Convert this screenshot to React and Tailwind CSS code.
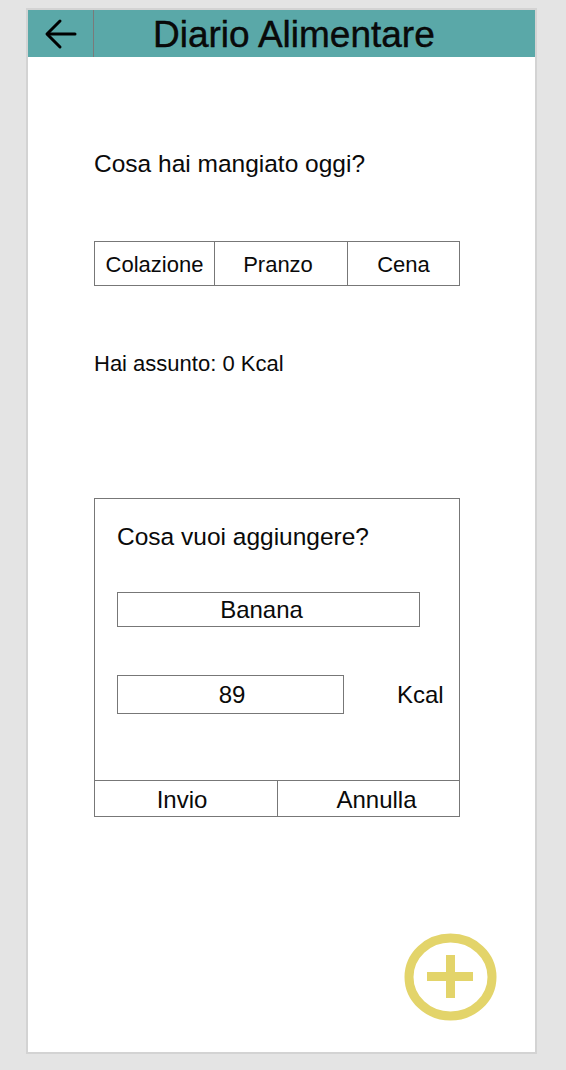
import React from "react";

const tabs = [
  { label: "Colazione", w: "w-[120px]", pad: "" },
  { label: "Pranzo", w: "w-[133px]", pad: "pr-[6px]" },
  { label: "Cena", w: "flex-1", pad: "" },
];

const App = () => {
  return (
    <div className="min-h-[1070px] bg-[#e4e4e4] pt-[8px] font-['Liberation_Sans',Arial,sans-serif] text-[#0a0a0a]">
      <div className="ml-[26px] w-[511px] h-[1046px] border-2 border-[#d3d3d3] bg-white flex flex-col">
        {/* Header */}
        <div className="h-[47px] bg-[#5aa8a8] flex items-stretch">
          <div className="w-[66px] border-r border-[#7a7a7a] flex items-center justify-center">
            <svg width="34" height="32" viewBox="0 0 34 32" fill="none" stroke="#000" strokeWidth="3" strokeLinecap="round" strokeLinejoin="round">
              <path d="M31 16H4" />
              <path d="M16 3L3 16l13 13" />
            </svg>
          </div>
          <div className="pl-[59px] flex items-center text-[37px] leading-none pt-[2px] [-webkit-text-stroke:0.4px_#000]">
            Diario Alimentare
          </div>
        </div>

        {/* Content */}
        <div className="pl-[66px] flex flex-col">
          <p className="mt-[93px] text-[24.5px] leading-[28px]">Cosa hai mangiato oggi?</p>

          <div className="mt-[63px] w-[366px] h-[45px] border border-[#777] flex">
            {tabs.map((t, i) => (
              <div
                key={t.label}
                className={`${t.w} ${t.pad} flex items-center justify-center text-[22px] pt-[2px] ${
                  i < tabs.length - 1 ? "border-r border-[#777]" : ""
                }`}
              >
                {t.label}
              </div>
            ))}
          </div>

          <p className="mt-[65px] text-[22px] leading-[26px]">Hai assunto: 0 Kcal</p>

          {/* Add food card */}
          <div className="mt-[121px] w-[366px] h-[319px] border border-[#777] flex flex-col">
            <div className="pl-[22px] pt-[24px] flex flex-col">
              <p className="text-[24.5px] leading-[28px]">Cosa vuoi aggiungere?</p>
              <div className="mt-[41px] w-[303px] h-[35px] border border-[#777] flex items-center justify-center text-[24px] pr-[14px]">
                Banana
              </div>
              <div className="mt-[48px] flex items-center">
                <div className="w-[227px] h-[39px] border border-[#777] flex items-center justify-center text-[24px] pl-[3px]">
                  89
                </div>
                <span className="ml-[53px] text-[24px]">Kcal</span>
              </div>
            </div>
            <div className="flex-1" />
            <div className="h-[36px] border-t border-[#777] flex text-[24px]">
              <div className="w-[183px] border-r border-[#777] flex items-center justify-center pr-[8px] pt-[3px]">
                Invio
              </div>
              <div className="flex-1 flex items-center justify-center pl-[16px] pt-[3px]">Annulla</div>
            </div>
          </div>
        </div>

        {/* Add button */}
        <div className="mt-[116px] flex justify-end pr-[38px]">
          <svg width="93" height="88" viewBox="0 0 93 88" fill="none">
            <ellipse cx="46.5" cy="44" rx="41.5" ry="39" stroke="#e3d46a" strokeWidth="9" />
            <rect x="23" y="39" width="46" height="9" fill="#e3d46a" />
            <rect x="42" y="22" width="9" height="43" fill="#e3d46a" />
          </svg>
        </div>
      </div>
    </div>
  );
};

export default App;
